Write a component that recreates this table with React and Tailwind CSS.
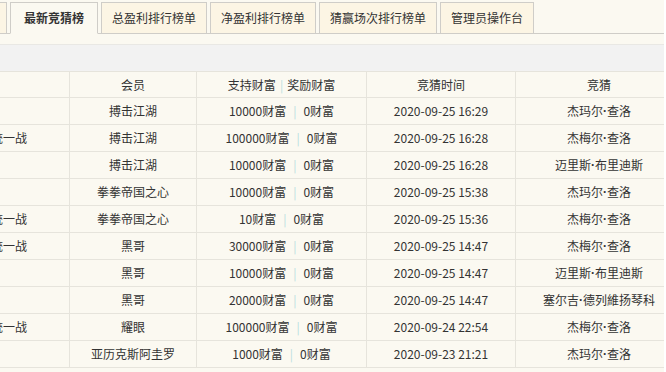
import React from "react";

const rows = [
  ["", "搏击江湖", "10000财富", "0财富", "2020-09-25 16:29", ["杰玛尔", "查洛"]],
  ["王者荣耀天下统一战", "搏击江湖", "100000财富", "0财富", "2020-09-25 16:28", ["杰梅尔", "查洛"]],
  ["", "搏击江湖", "10000财富", "0财富", "2020-09-25 16:28", ["迈里斯", "布里迪斯"]],
  ["", "拳拳帝国之心", "10000财富", "0财富", "2020-09-25 15:38", ["杰玛尔", "查洛"]],
  ["王者荣耀天下统一战", "拳拳帝国之心", "10财富", "0财富", "2020-09-25 15:36", ["杰梅尔", "查洛"]],
  ["王者荣耀天下统一战", "黑哥", "30000财富", "0财富", "2020-09-25 14:47", ["杰梅尔", "查洛"]],
  ["", "黑哥", "10000财富", "0财富", "2020-09-25 14:47", ["迈里斯", "布里迪斯"]],
  ["", "黑哥", "20000财富", "0财富", "2020-09-25 14:47", ["塞尔吉", "德列維扬琴科"]],
  ["王者荣耀天下统一战", "耀眼", "100000财富", "0财富", "2020-09-24 22:54", ["杰梅尔", "查洛"]],
  ["", "亚历克斯阿圭罗", "1000财富", "0财富", "2020-09-23 21:21", ["杰玛尔", "查洛"]],
];

const tabs = [
  ["总盈利排行榜单", "w-[106px]"],
  ["净盈利排行榜单", "w-[106px]"],
  ["猜赢场次排行榜单", "w-[118px]"],
  ["管理员操作台", "w-[94px]"],
];

function Row({ cells, header }) {
  const [c1, c2, a, b, t, g] = cells;
  return (
    <div className={"flex h-[27px] border-b border-[#e6e4dc] " + (header ? "border-t" : "")}>
      <div className="w-[69px] shrink-0 flex justify-end items-center overflow-hidden whitespace-nowrap pr-[42px]">
        {c1}
      </div>
      <div className="w-[127px] shrink-0 border-l border-[#e6e4dc] flex items-center justify-center whitespace-nowrap">
        {c2}
      </div>
      <div className="w-[170px] shrink-0 border-l border-[#e6e4dc] flex items-center justify-center whitespace-nowrap">
        <span>{a}</span>
        <span className={"text-[#b8dede] " + (header ? "mx-[4px]" : "mx-[7px]")}>|</span>
        <span>{b}</span>
      </div>
      <div className="w-[149px] shrink-0 border-l border-[#e6e4dc] flex items-center justify-center whitespace-nowrap">
        {t}
      </div>
      <div className="w-[167px] shrink-0 border-l border-[#e6e4dc] flex items-center justify-center whitespace-nowrap">
        {Array.isArray(g) ? (
          <>
            <span>{g[0]}</span>
            <span className="font-['Liberation_Sans'] font-bold">·</span>
            <span>{g[1]}</span>
          </>
        ) : (
          g
        )}
      </div>
    </div>
  );
}

export default function App() {
  return (
    <div className="w-[666px] h-[372px] bg-white overflow-hidden">
      <div
        className="w-[664px] h-[372px] bg-[#fbf9f1] overflow-hidden text-[12px] text-[#333]"
        style={{ fontFamily: '"Noto Sans CJK SC", "Noto Sans", sans-serif' }}
      >
        <div className="flex items-end gap-[3px] h-[34px] border-b border-[#cfcdc8] -ml-[75px]">
          <div className="-mb-px h-[32px] w-[82px] shrink-0 border border-[#cfcdc8] bg-[#fcf5e4] flex items-center justify-center">
            竞猜大厅
          </div>
          <div className="-mb-px h-[32px] w-[88px] shrink-0 border border-[#cfcdc8] border-b-[#fbf9f1] bg-[#fbf9f1] flex items-center justify-center font-bold">
            最新竞猜榜
          </div>
          {tabs.map(([t, w]) => (
            <div
              key={t}
              className={"-mb-px h-[32px] shrink-0 border border-[#cfcdc8] bg-[#fcf5e4] flex items-center justify-center whitespace-nowrap " + w}
            >
              {t}
            </div>
          ))}
        </div>
        <div className="h-[10px]" />
        <div className="h-[27px] border-t border-[#e9e8e4] bg-[#f2f2f2]" />
        <Row header cells={["", "会员", "支持财富", "奖励财富", "竞猜时间", "竞猜"]} />
        {rows.map((r, i) => (
          <Row key={i} cells={r} />
        ))}
      </div>
    </div>
  );
}
